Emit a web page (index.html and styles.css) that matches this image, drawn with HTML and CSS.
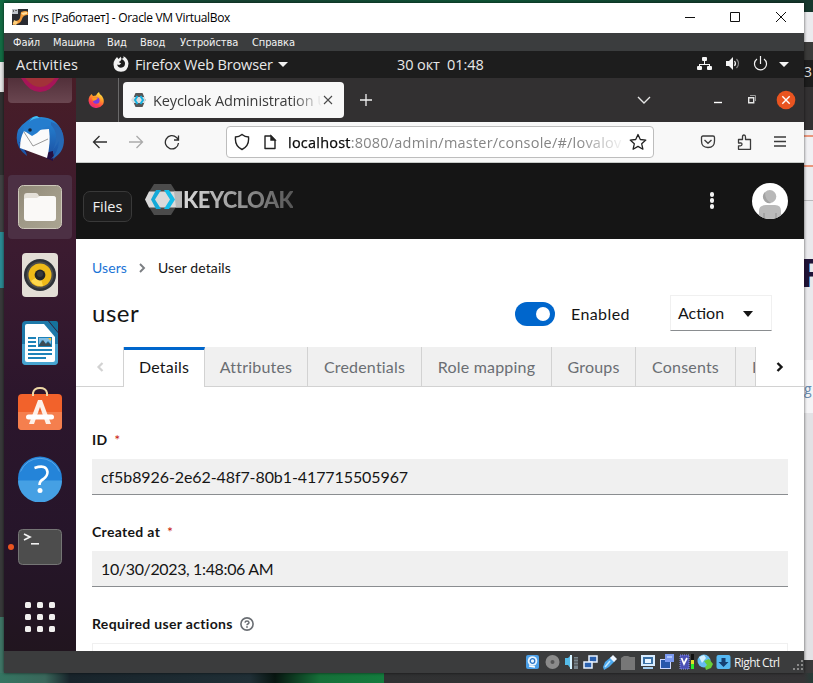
FILE: index.html
```html
<!DOCTYPE html>
<html lang="ru">
<head>
<meta charset="utf-8">
<title>rvs [Работает] - Oracle VM VirtualBox</title>
<link rel="stylesheet" href="styles.css">
</head>
<body>
<div class="desktop">
  <div class="edge-left"></div>
  <div class="edge-right"><span class="peek-time">3</span><span class="peek-head">F</span><span class="peek-link">g</span></div>
  <div class="edge-bottom"></div>

  <div class="window">
    <div class="titlebar">
      <svg class="app-icon" width="16" height="16" viewBox="0 0 16 16"><path fill="#292b31" d="M0 0h16v16H0z"/><path d="M9 3q5-2 7 0v3q-5 0-6 4-1 4-5 5l-4 1q-1-3 2-4 4 0 5-3z" fill="#f29a38"/><path d="M9 4l6-1v2l-4 1z" fill="#ffe0a0"/><path d="M2 11l4 2-2 3-3-1z" fill="#ffd07a"/><path d="M0 0h6v5H0z" fill="#bfc4cb"/><path d="M1 1h1v2H1zM3 1h2v1H3z" fill="#666"/></svg>
      <span class="title-text">rvs [Работает] - Oracle VM VirtualBox</span>
      <svg class="win-controls" width="110" height="12" viewBox="0 0 110 12" fill="none" stroke="#111" stroke-width="1"><path d="M1 6.500h10M46.500 1.500h9v9h-9zM92 1l10 10M102 1L92 11"/></svg>
    </div>
    <div class="menubar">
      <span class="m1">Файл</span><span class="m2">Машина</span><span class="m3">Вид</span><span class="m4">Ввод</span><span class="m5">Устройства</span><span>Справка</span>
    </div>
    <div class="topbar">
      <span class="activities">Activities</span>
      <svg class="ff-mono" width="16" height="16" viewBox="0 0 16 16"><path d="M2 3.500L4 1l1.500 2L8 .500 10 0q5 2 5.500 7.500Q15 15.500 8 15.800.800 15.500.500 8.500 .500 5.500 2 3.500z" fill="#f2f2f2"/><path d="M7.500 0l3 0 0 2-2 1z" fill="#1d1d1d"/><path d="M8.500 3q3.500 1.500 3.500 4.500 0 4-4 4.200-3.500-.200-3.800-3.200l2 .500 2-1.500-2.500-1.500q2-.300 2.800-3z" fill="#1d1d1d"/></svg>
      <span class="app-name">Firefox Web Browser</span>
      <i class="caret"></i>
      <span class="clock">30 окт&nbsp; 01:48</span>
      <svg class="tray" width="94" height="16" viewBox="0 0 94 16"><g fill="#f4f4f4"><rect x="6" y="1" width="5" height="4" rx="1"/><rect x="1" y="10" width="5" height="4" rx="1"/><rect x="11" y="10" width="5" height="4" rx="1"/><path d="M8 5h1v3h5v3h-1V9H4v2H3V8h5zM30 5h3l4-4v13l-4-4h-3zM83 6h10l-5 5z"/></g><g fill="none" stroke="#f4f4f4" stroke-width="1.200"><path d="M38.500 5q2 2.500 0 5"/><path d="M40.500 3q4 4.500 0 9" stroke="#888"/><path d="M61 3a6 6 0 1 0 7 0M64.500 0v8"/></g></svg>
    </div>

    <div class="guest">
      <div class="dock">
        <div class="dock-item dock-cut"><svg width="44" height="16" viewBox="0 0 44 16"><path d="M3 0h38q-8 14-19 14T3 0z" fill="#a71558"/><path d="M7 0h30q-7 9-15 9T7 0z" fill="#a23239"/></svg></div>
        <div class="dock-item"><svg width="48" height="48" viewBox="0 0 48 48"><defs><linearGradient id="tb" x1="0" y1="0" x2="0" y2="1"><stop offset="0" stop-color="#2688d8"/><stop offset="1" stop-color="#1b4c9e"/></linearGradient></defs><path d="M2 15Q10 3 25 2q16 1 21 15 4 15-9 28 2-6-1-8-7 2-15 1-7-1-12-5l2 8Q-3 31 2 15z" fill="url(#tb)"/><path d="M3 27l8 12q-2-5 0-7zM24 39l13-3v10q-7-2-13-7z" fill="#241044"/><path d="M8 16l25-2q2 14-2 29L4 33q0-10 4-17z" fill="#fbfbfb"/><path d="M8 17l9 14 15-7" fill="none" stroke="#999" stroke-width="1"/><path d="M7 16q1-12 13-15l5 3q9-1 12 6-11 2-16 8l-5 3-6-4z" fill="#247dce"/><path d="M17 2l4-1 3 2q-7 0-11 4z" fill="#43bdf3"/><circle cx="14" cy="15" r="1.800" fill="#142238"/><path d="M35 10q9 9 2 25l6-9q-1 12-8 18 13-5 13-19Q47 10 35 7z" fill="#2669b6"/></svg></div>
        <div class="dock-item dock-active"><svg width="46" height="46" viewBox="0 0 46 46"><defs><linearGradient id="fi" x1="0" y1="0" x2="1" y2="1"><stop offset="0" stop-color="#8f8876"/><stop offset=".5" stop-color="#a09a88"/><stop offset="1" stop-color="#aaa491"/></linearGradient></defs><rect x="1.500" y="1.500" width="43" height="43" rx="5" fill="url(#fi)" stroke="#cdc8ba"/><path d="M7 12q0-3 3-3h9q2 0 3 3h14q3 0 3 3v4H7z" fill="#e4e0d8"/><path d="M7 16q0-2 3-2h10l3-2h13q3 0 3 3v19q0 3-3 3H10q-3 0-3-3z" fill="#faf9f7"/></svg></div>
        <div class="dock-item"><svg width="38" height="46" viewBox="0 0 38 46"><rect x="1" y="1" width="36" height="44" rx="4" fill="#e3ded6"/><circle cx="19" cy="23" r="16" fill="#2e3238"/><circle cx="19" cy="23" r="13.500" fill="#4b4c4c"/><circle cx="19" cy="23" r="11.500" fill="#efba18"/><path d="M19 23l-9 6q4 6 12 5z" fill="#ffd94c"/><circle cx="19" cy="23" r="5.400" fill="#222427"/><circle cx="19" cy="22" r="3" fill="#383a3d"/></svg></div>
        <div class="dock-item"><svg width="38" height="46" viewBox="0 0 38 46"><path d="M5 1h22l10 12v28q0 4-4 4H5q-4 0-4-4V5q0-4 4-4z" fill="#1e79a9"/><path d="M1 24h36v17q0 4-4 4H5q-4 0-4-4z" fill="#47a4d0"/><path d="M28 1h7q2 0 2 2v9z" fill="#15729c"/><path d="M6 4h17l11 13v23q0 2-2 2H6q-2 0-2-2V6q0-2 2-2z" fill="#fff"/><g fill="#1d82b8"><path d="M7 17h8v2H7zM7 21h8v2H7zM7 25h8v2H7zM7 29h24v2H7zM7 33h24v2H7zM7 37h18v2H7zM17 17h14v10H17z"/></g><path d="M18 18h12v6l-3-3-3 3-3-4-3 5z" fill="#84bee3"/><path d="M18 25l4-5 3 4 2-2 3 3v1H18z" fill="#3b4b55"/><path d="M27 18h3v3z" fill="#ffc129"/></svg></div>
        <div class="dock-item bag"><svg width="46" height="46" viewBox="0 0 46 46"><rect x="1" y="8" width="44" height="36" rx="4" fill="#f2622b"/><path d="M1 26h44v14q0 4-4 4H5q-4 0-4-4z" fill="#f57f4e"/><path d="M16 10V7q1-5 7-5t7 5v3" fill="none" stroke="#eed8a5" stroke-width="2"/><path d="M21 14h4l9 24h-5l-6-17-6 17h-5z" fill="#fdf0e8"/><rect x="9" y="28.500" width="28" height="5" rx="2.500" fill="#fff"/></svg></div>
        <div class="dock-item"><svg width="46" height="46" viewBox="0 0 46 46"><circle cx="23" cy="22.500" r="22" fill="#2484d9"/><path d="M1 24.500h44a22 22 0 0 1-44 0z" fill="#45a0e4"/><path d="M3.500 15.500a21 21 0 0 1 39 0" fill="none" stroke="#59a7e8"/><path d="M17.500 12q12-4 13 4 0 4-4 7-4 2-4 6" fill="none" stroke="#fff" stroke-width="2.600"/><circle cx="23" cy="34.500" r="2.500" fill="#fff"/></svg></div>
        <div class="dock-item running"><svg width="46" height="38" viewBox="0 0 46 38"><rect x="1.500" y="1.500" width="43" height="35" rx="4" fill="#4d4d4d" stroke="#757575"/><path d="M7 6l6 3-6 3" fill="none" stroke="#f2f2f2" stroke-width="1.700"/><path d="M14 15h8v1.600h-8z" fill="#f2f2f2"/></svg></div>
        <div class="apps"><i></i><i></i><i></i><i></i><i></i><i></i><i></i><i></i><i></i></div>
      </div>

      <div class="browser">
        <div class="tabstrip">
          <div class="pinned"><svg width="16" height="16" viewBox="0 0 16 16"><defs><linearGradient id="fx" x1=".8" y1="0" x2=".3" y2="1"><stop offset="0" stop-color="#fff04a"/><stop offset=".4" stop-color="#ff9a28"/><stop offset=".75" stop-color="#ff3d4c"/><stop offset="1" stop-color="#e0268a"/></linearGradient></defs><path d="M1.500 4.500L3.500 2l1.500 2 3-.500Q9 1 11 0q0 2 3 4 3 4.500 1 8.500-3 3.800-7.500 3.500-6-1-7-7 0-3 1-4.500z" fill="url(#fx)"/><circle cx="8.300" cy="8.500" r="3.300" fill="#7a3be0"/><path d="M4 6l4-1 2 1-2 2-3 1z" fill="#ff9a20"/></svg></div>
          <div class="tab">
            <svg width="16" height="14" viewBox="0 0 16 14"><path d="M4.500 0h7l3 7-3 7h-7l-3-7z" fill="#555"/><path d="M2 4h12v6H2L0 7z" fill="#dcdcdc"/><path d="M6.500 3L4 7l2.500 4M9.500 3L12 7l-2.500 4" fill="none" stroke="#16b1e0" stroke-width="2"/></svg>
            <span class="tab-label">Keycloak Administration U</span>
            <svg class="tab-x" width="10" height="10" viewBox="0 0 10 10" stroke="#4a4a4a" stroke-width="1.100"><path d="M1 1l8 8M9 1L1 9"/></svg>
          </div>
          <svg class="plus" width="12" height="12" viewBox="0 0 12 12" stroke="#f0f0f0" stroke-width="1.300"><path d="M6 0v12M0 6h12"/></svg>
          <svg class="tabs-end" width="160" height="20" viewBox="0 0 160 20"><g fill="none" stroke="#e6e6e6" stroke-width="1.400"><path d="M2 7l6 6 6-6"/><path d="M78 12.500h8" stroke="#fff"/><path d="M112.700 7.700h5v5h-5z"/><path d="M114 5.500h5.500V11" stroke="#999" stroke-width="1"/></g><circle cx="150" cy="10" r="9.300" fill="#e95420"/><path d="M146.300 6.300l7.400 7.400M153.700 6.300l-7.400 7.400" stroke="#fff" stroke-width="1.400"/></svg>
        </div>
        <div class="toolbar">
          <svg class="nav" width="92" height="16" viewBox="0 0 92 16" fill="none" stroke="#2f2f2f" stroke-width="1.300"><path d="M15 8H1.500M7.500 2l-6 6 6 6"/><path d="M37 8h13.500M44.500 2l6 6-6 6" stroke="#aaa"/><path d="M86.500 9a6.600 6.600 0 1 1-2-5.500l2 2M86.500 1.500v4.500h-4.500"/></svg>
          <div class="urlbar">
            <svg width="44" height="18" viewBox="0 0 44 18" fill="none" stroke="#222" stroke-width="1.400"><path d="M8 1.500q3 2.500 6.500 2.500 1 9-6.500 12.500Q.5 13 1.500 4 5 4 8 1.500z"/><path d="M31 3h6l4 4v8.500H31z" stroke-linejoin="round"/><path d="M37 3v4h4z" fill="#222"/></svg>
            <span class="url"><b>localhost</b>:8080/admin/master/console/#/lovalov</span>
            <svg class="star" width="18" height="18" viewBox="0 0 18 18"><path d="M9 1.500l2.300 5 5.500.600-4.100 3.700 1.200 5.400L9 13.400l-4.900 2.800 1.200-5.400L1.200 7.100l5.500-.6z" fill="none" stroke="#222" stroke-width="1.300" stroke-linejoin="round"/></svg>
          </div>
          <svg class="tools" width="88" height="18" viewBox="0 0 88 18" fill="none" stroke="#3b3b3b" stroke-width="1.300"><path d="M3 3h10q1.500 0 1.500 1.500V8q0 6.500-6.500 6.500T1.500 8V4.500Q1.500 3 3 3z"/><path d="M4.500 7L8 10.300 11.500 7"/><path d="M38.500 6.500h4V4q0-2 1.500-2t1.500 2v2.500h5v9.800H38.500v-3.500h2q1.500 0 1.500-1.500T40.500 10h-2z" stroke-linejoin="round"/><path d="M74 4h12M74 8.500h12M74 13h12"/></svg>
        </div>

        <div class="kc-header">
          <span class="dock-tip">Files</span>
          <svg class="kc-mark" width="37" height="31" viewBox="0 0 37 31"><path d="M9 0h17l5 8v15l-5 8H9l-5-8V8z" fill="#4b4b4b"/><path d="M4 7.500h33v16H4L0 15.500z" fill="#dadada"/><path d="M29 7.500h8v16h-6z" fill="#b8b8b8"/><path d="M11 6h5l-6 9.500 6 9.500h-5L6 15.500z" fill="#14a9d8"/><path d="M19 6h5l6 9.500-6 9.500h-5l6-9.500z" fill="#14bce8"/></svg>
          <span class="kc-word">KEYCLOAK</span>
          <span class="kebab"><i></i><i></i><i></i></span>
          <svg class="avatar" width="36" height="36" viewBox="0 0 36 36"><defs><clipPath id="av"><circle cx="18" cy="18" r="18"/></clipPath></defs><g clip-path="url(#av)"><path fill="#fff" d="M0 0h36v36H0z"/><circle cx="17.800" cy="13.500" r="6.500" fill="#b8b8b8"/><path d="M13 9a6.500 6.500 0 0 0 6 11q-6-3-6-11z" fill="#a3a3a3"/><path d="M7 36v-8q0-6 7-6h9q6 0 6 6v8z" fill="#bababa"/><path d="M11 30h2v6h-2zM23 30h2v6h-2z" fill="#a5a5a5"/></g></svg>
        </div>

        <div class="crumbs"><a>Users</a><svg width="8" height="10" viewBox="0 0 8 10"><path d="M2 1l4 4-4 4" fill="none" stroke="#7b7e82" stroke-width="1.900"/></svg><span>User details</span></div>
        <div class="heading">
          <h1>user</h1>
          <span class="switch"><i></i></span>
          <span class="enabled">Enabled</span>
          <span class="action"><span>Action</span><i class="caret dark"></i></span>
        </div>
        <div class="tabs">
          <span class="scroll prev"><svg width="8" height="10" viewBox="0 0 8 10"><path d="M6.500 1l-4 4 4 4" fill="none" stroke="#d2d2d2" stroke-width="2.200"/></svg></span>
          <span class="t on w1">Details</span><span class="t w2">Attributes</span><span class="t w3">Credentials</span><span class="t w4">Role mapping</span><span class="t w5">Groups</span><span class="t w6">Consents</span><span class="t w7">I</span>
          <span class="scroll"><svg width="8" height="10" viewBox="0 0 8 10"><path d="M1.500 1l4 4-4 4" fill="none" stroke="#151515" stroke-width="2.400"/></svg></span>
        </div>
        <div class="form">
          <label>ID <em>*</em></label>
          <div class="field id">cf5b8926-2e62-48f7-80b1-417715505967</div>
          <label>Created at <em>*</em></label>
          <div class="field date">10/30/2023, 1:48:06 AM</div>
          <label class="req">Required user actions <svg width="14" height="14" viewBox="0 0 14 14" fill="none" stroke="#6a6e73"><circle cx="7" cy="7" r="6.100" stroke-width="1.600"/><path d="M5 5.600q.2-1.600 2-1.600t2 1.500q0 1-1.100 1.500-.9.500-.9 1.300" stroke-width="1.500"/><path d="M7 9.200v1.600" stroke-width="1.700"/></svg></label>
          <div class="select"></div>
        </div>
      </div>
    </div>

    <div class="statusbar">
      <svg width="208" height="18" viewBox="0 0 208 18">
        <rect x="1" y="2" width="13" height="14" rx="2" fill="#4a9fe8"/><circle cx="7.500" cy="8" r="4.800" fill="#e8f5ff"/><circle cx="7.500" cy="8" r="2.300" fill="none" stroke="#2a76c8" stroke-width="1.300"/><path d="M4 13l6 1" stroke="#fff" stroke-width="1.500"/>
        <circle cx="27.500" cy="9" r="7" fill="#8b8b8b"/><circle cx="27.500" cy="9" r="2" fill="#555"/>
        <path d="M40 5h3l3-3v14l-3-4h-3z" fill="#55bce9"/><path d="M45 2h2v14h-2z" fill="#d5f2ff"/><path d="M49 4h4v12h-4z" fill="#77848c"/><path d="M49 6h4M49 9h4M49 12h4" stroke="#444"/>
        <rect x="64" y="3" width="8" height="6" fill="#2a61af" stroke="#e8f2ff" stroke-width="1.500"/><rect x="59" y="9" width="8" height="6" fill="#2b62b0" stroke="#e8f2ff" stroke-width="1.500"/>
        <path d="M78 14l2-5 6-5 4 4-6 6-5 3z" fill="#4da9ee"/><path d="M85 5l3-3 4 4-3 3z" fill="#eef6ff"/><path d="M80 14l5-6" stroke="#c2e8ff" stroke-width="1.500"/>
        <path d="M96 5l3-2h4l2 1h5v13H96z" fill="#777"/>
        <rect x="117" y="3" width="12" height="9" fill="#3970a6" stroke="#d7ecff" stroke-width="2"/><path d="M120 6h6v4h-6z" fill="#e6f3ff"/><path d="M118 14h10v2h-10z" fill="#a4cdf0"/>
        <rect x="135.500" y="6.500" width="10" height="9" fill="#2856ab" stroke="#ccd6ff"/><path d="M140 1h9v8h-9z" fill="#7a98ef"/><path d="M142 3h5v2h-5z" fill="#abc5ff"/>
        <rect x="155" y="2" width="9" height="14" fill="#4b50b5" stroke="#8d91ec" stroke-dasharray="1 1"/><path d="M156.500 5l2.500 6 3-6" fill="none" stroke="#fff" stroke-width="1.700"/><path d="M166 1h3v6h-3z" fill="#111"/><path d="M166 7h3v4h-3z" fill="#dddf27"/><path d="M166 11h3v5h-3z" fill="#2bea2b"/>
        <circle cx="179" cy="8" r="6.500" fill="#66bdf0"/><path d="M174 4l5-2 2 3-4 5z" fill="#d5f1ff"/><path d="M179 8l5-2 4 5-2 4-5 2-1-3 2-2z" fill="#69ce39"/>
        <rect x="191.500" y="2" width="14" height="14" rx="2" fill="#55b8f3"/><path d="M196.500 5h4v4h3l-5 5-5-5h3z" fill="#153f73"/>
      </svg>
      <span class="hostkey">Right Ctrl</span>
      <svg class="grip" width="12" height="12" viewBox="0 0 12 12" fill="#8a8a8a"><path d="M9 0h2v2H9zM5 4h2v2H5zM9 4h2v2H9zM1 8h2v2H1zM5 8h2v2H5zM9 8h2v2H9z"/></svg>
    </div>
  </div>
</div>
</body>
</html>
```
FILE: styles.css
```css
* { box-sizing: border-box; }
body { margin: 0; font-family: "Open Sans", "Noto Sans", sans-serif; }
svg { display: block; flex: none; }
i { font-style: normal; }
.desktop { position: relative; width: 813px; height: 683px; overflow: hidden; background: linear-gradient(90deg, #11613e, #174433 30%, #0f5537 60%, #16382d); }
.edge-left { position: absolute; left: 0; top: 0; width: 4px; height: 683px; background: linear-gradient(#136b43 0 62px, #e6e6e6 62px 92px, #303131 92px 175px, #414243 175px 232px, #2b8993 232px 288px, #38393a 288px 617px, #3f7465 617px); }
.edge-right { position: absolute; right: 0; top: 0; width: 9px; height: 683px; overflow: hidden; background: linear-gradient(#16382d 0 12px, #ebebee 12px 42px, #3b3b3a 42px 60px, #1d1d1d 60px 87px, #333132 87px 130px, #ececef 130px 135px, #e9967c 135px 137px, #f1f1f4 137px 165px, #e9967c 165px 167px, #ececef 167px 200px, #b9b9bc 200px 201px, #e9e9ec 201px 360px, #f4f4f6 360px 413px, #e2e2e5 413px 660px, #39393a 660px); }
.edge-right span { position: absolute; left: 0; }
.peek-time { top: 62px; font-size: 14px; color: #ddd; }
.peek-head { top: 246px; font: 700 40px/54px "Liberation Sans", sans-serif; color: #1f1338; }
.edge-right .peek-head { left: -3px; }
.peek-link { top: 379px; font-size: 14px; color: #6a8bb0; }
.edge-bottom { position: absolute; left: 0; bottom: 0; width: 813px; height: 10px; background: linear-gradient(90deg, #347561, #3a675b 45px, #18242b 70px, #202f36 250px, #081611 275px, #167039 320px, #147c3e 384px, #303132 384px, #353436 804px, #263c37); }

.window { position: absolute; left: 4px; top: 3px; width: 800px; height: 670px; display: flex; flex-direction: column; background: #fff; box-shadow: 0 0 3px rgba(0,0,0,.65); }
.titlebar { height: 30px; display: flex; align-items: center; padding: 0 10px 2px 8px; font-size: 12px; color: #000; }
.title-text { margin-left: 5px; letter-spacing: -.32px; }
.win-controls { margin-left: auto; }
.menubar { height: 18px; display: flex; align-items: center; padding-left: 9px; background: #3b3d3e; color: #f2f2f2; font: 11px "DejaVu Sans Condensed", "DejaVu Sans", sans-serif; letter-spacing: -.1px; }
.m1 { width: 40px; } .m2 { width: 54px; } .m3 { width: 33px; } .m4 { width: 40px; } .m5 { width: 72px; }
.topbar { height: 27px; display: flex; align-items: center; padding: 0 14px 1px 12px; background: #1d1d1d; color: #e9e9e9; font-size: 14.500px; white-space: nowrap; }
.activities { width: 97px; letter-spacing: .25px; }
.app-name { width: 137px; margin-left: 6px; letter-spacing: -.15px; }
.caret { width: 0; height: 0; border: 5px solid transparent; border-top-color: #f1f1f1; border-bottom: 0; margin-left: 6px; }
.caret.dark { border-top-color: #151515; border-top-width: 6px; margin: 1px 1px 0 0; }
.clock { margin-left: 109px; letter-spacing: -.1px; }
.tray { margin-left: auto; }

.guest { display: flex; height: 573px; }
.dock { width: 72px; display: flex; flex-direction: column; gap: 4px; padding: 0 4px; background: linear-gradient(#481d27, #3b1b30 30%, #2c162c 55%, #26152a 80%, #21151f); }
.dock-item { position: relative; height: 64px; flex: none; display: flex; align-items: center; justify-content: center; border-radius: 4px; }
.dock-cut { height: 25px; align-items: flex-start; border-radius: 0 0 4px 4px; background: linear-gradient(#52303a, #6a4650); }
.dock-active { background: #4c3044; }
.dock-item.bag { padding-bottom: 5px; }
.running::before { content: ""; position: absolute; left: 0; top: 29px; width: 6px; height: 6px; border-radius: 50%; background: #e95420; }
.apps { height: 68px; display: grid; grid-template-columns: repeat(3, 6px); grid-auto-rows: 6px; gap: 6px; place-content: center; }
.apps i { background: #f1f0ef; border-radius: 1.500px; }

.browser { width: 728px; overflow: hidden; background: #fff; color: #151515; font-family: Lato, "Open Sans", sans-serif; }
.tabstrip { height: 44px; display: flex; align-items: center; background: #323031; font-family: "Open Sans", sans-serif; }
.pinned { width: 43px; height: 44px; padding: 14px 0 0 12px; border-right: 1px solid #6a696a; }
.tab { width: 221px; height: 36px; margin-left: 4px; padding: 0 11px 0 8px; display: flex; align-items: center; border-radius: 4px; background: #f8f8f8; }
.tab-label { width: 173px; margin: 0 -9px 0 6px; overflow: hidden; white-space: nowrap; font-size: 14.500px; letter-spacing: -.12px; color: #3b3b3b; -webkit-mask-image: linear-gradient(90deg, #000 140px, transparent 169px); mask-image: linear-gradient(90deg, #000 140px, transparent 169px); }
.tab-x { margin-left: auto; }
.plus { margin-left: 16px; }
.tabs-end { margin-left: auto; margin-right: 8px; }
.toolbar { height: 41px; display: flex; align-items: center; padding: 0 16px; border-bottom: 1px solid #c7cac8; background: #f8f8f8; }
.urlbar { width: 428px; height: 32px; margin-left: 42px; padding: 0 6px 0 7px; display: flex; align-items: center; border: 1px solid #bdbdbd; border-radius: 4px; background: #fff; font: 14.500px "Open Sans", sans-serif; }
.url { width: 338px; margin-left: 10px; overflow: hidden; white-space: nowrap; letter-spacing: .22px; color: #858585; -webkit-mask-image: linear-gradient(90deg, #000 290px, transparent 338px); mask-image: linear-gradient(90deg, #000 290px, transparent 338px); }
.url b { font-weight: 400; color: #0a0a0a; -webkit-text-stroke: .25px #0a0a0a; }
.star { margin-left: auto; }
.tools { margin-left: auto; }

.kc-header { position: relative; height: 76px; display: flex; align-items: center; padding: 0 16px 0 69px; background: #151515; }
.dock-tip { position: absolute; left: 7px; top: 28px; width: 49px; height: 31px; border: 1px solid #393939; border-radius: 7px; background: #1c1c1c; color: #f0f0f0; text-align: center; font: 14.500px/29px "Open Sans", sans-serif; }
.kc-word { margin-left: 1px; font: 900 22px/30px Lato, sans-serif; letter-spacing: -.6px; background: linear-gradient(90deg, #d9d9d9, #999 50%, #565656); -webkit-background-clip: text; background-clip: text; color: transparent; }
.kc-mark, .kc-word { margin-top: -3px; }
.kebab { margin: -1px 0 0 auto; display: grid; gap: 1.500px; }
.kebab i { width: 4.400px; height: 4.400px; border-radius: 50%; background: #f3f3f3; }
.avatar { margin-left: 38px; }

.crumbs { height: 56px; display: flex; align-items: center; padding: 0 16px; font-size: 14px; letter-spacing: .1px; }
.crumbs a { color: #1b74d6; }
.crumbs svg { margin: 2px 12px 0 11px; }
.heading { height: 36px; display: flex; align-items: center; padding: 0 32px 0 16px; }
.heading h1 { margin: 0; width: 423px; font-size: 24px; line-height: 30px; font-weight: 400; letter-spacing: .5px; }
.switch { width: 40px; height: 24px; margin-top: 2px; padding: 5px 4px 0 21px; border-radius: 12px; background: #06c; }
.switch i { display: block; width: 14px; height: 14px; border-radius: 50%; background: #fff; }
.enabled { margin-left: 16px; font-size: 16px; letter-spacing: .4px; }
.action { width: 102px; height: 36px; margin-left: auto; padding: 0 17px 0 7px; display: flex; align-items: center; justify-content: space-between; border: 1px solid #f0f0f0; border-bottom-color: #8a8d90; font-size: 16px; }
.action span { margin-top: -1px; }
.tabs { display: flex; height: 40px; margin-top: 16px; font-size: 16px; letter-spacing: .2px; color: #6a6e73; }
.scroll { flex: 0 0 48px; display: flex; align-items: center; justify-content: center; border-bottom: 1px solid #d2d2d2; }
.prev { border-right: 1px solid #d2d2d2; }
.t { flex: none; line-height: 40px; text-align: center; background: #f0f0f0; border-right: 1px solid #d2d2d2; border-bottom: 1px solid #d2d2d2; white-space: nowrap; overflow: hidden; }
.t.on { line-height: 34px; color: #151515; background: #fff; border-top: 3px solid #06c; border-bottom: 0; }
.w1 { width: 81px; } .w2 { width: 103px; } .w3 { width: 114px; } .w4 { width: 130px; } .w5 { width: 84px; } .w6 { width: 100px; }
.w7 { width: 20px; padding-left: 16px; text-align: left; }
.form { padding: 42px 16px 0; }
.form label { display: block; height: 30px; line-height: 22px; font-size: 14px; font-weight: 700; letter-spacing: .33px; }
.form em { margin-left: 3px; color: #c9190b; font-style: normal; font-weight: 400; }
.field { height: 36px; margin-bottom: 26px; padding-left: 9px; line-height: 36px; font-size: 16px; background: #f0f0f0; border-bottom: 1px solid #8a8d90; }
.id { letter-spacing: -.09px; }
.date { letter-spacing: -.36px; }
.form .req { display: flex; align-items: center; gap: 7px; height: 22px; margin-bottom: 8px; }
.select { height: 36px; border: 1px solid #f0f0f0; }

.statusbar { height: 22px; display: flex; align-items: center; padding-left: 521px; background: #3b3c3d; color: #f2f2f2; font-size: 12px; }
.hostkey { margin-left: 1px; letter-spacing: -.6px; white-space: nowrap; }
.grip { margin: 8px 0 0 auto; }
```
